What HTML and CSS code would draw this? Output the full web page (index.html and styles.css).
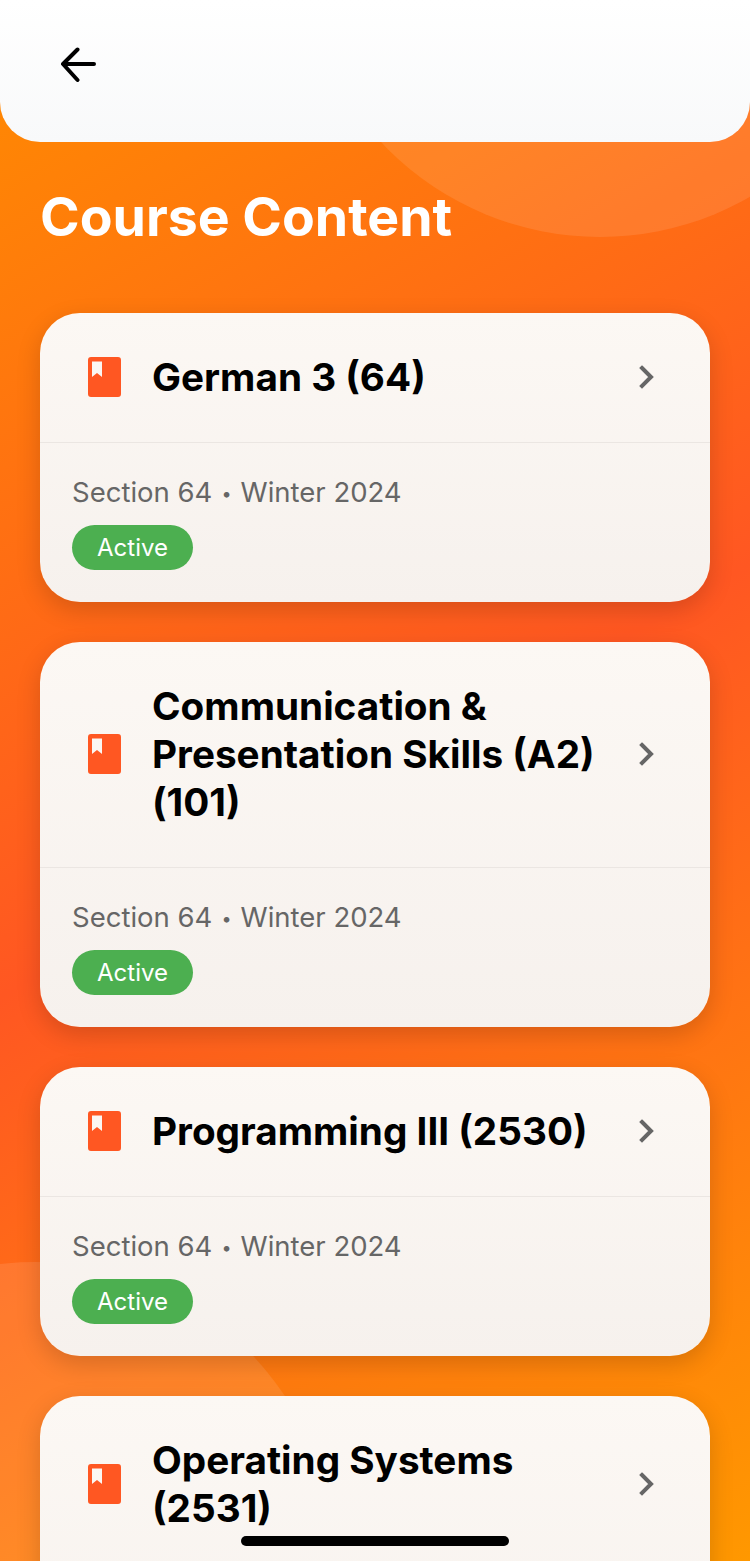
FILE: index.html
```html
<!DOCTYPE html>
<html lang="en">
<head>
<meta charset="utf-8">
<title>Course Content</title>
<link rel="stylesheet" href="styles.css">
</head>
<body>
<div class="screen">
  <div class="blob blob-top"></div>
  <div class="blob blob-bottom"></div>

  <header class="topbar">
    <button class="back" aria-label="Back">
      <svg width="37" height="36" viewBox="0 0 37 36" fill="none" stroke="#000" stroke-width="4" stroke-linecap="round" stroke-linejoin="round"><path d="M35 17H5M18.500 2.500 4 17 18.500 33"/></svg>
    </button>
  </header>

  <main class="content">
    <h1 class="page-title">Course Content</h1>

    <article class="card">
      <div class="card-head">
        <svg class="book" width="33" height="40" viewBox="0 0 33 40"><path fill="#ff5722" fill-rule="evenodd" d="M3 0h27a3 3 0 0 1 3 3v34a3 3 0 0 1-3 3H3a3 3 0 0 1-3-3V3a3 3 0 0 1 3-3Zm1 4.500V20l5-4 5 4V4.500Z"/></svg>
        <h2 class="course-name">German 3 (64)</h2>
        <svg class="chevron" width="18" height="26" viewBox="0 0 18 26" fill="none" stroke="#666" stroke-width="4" stroke-linecap="square" stroke-linejoin="miter"><path d="M4 4l9 9-9 9"/></svg>
      </div>
      <div class="card-foot">
        <p class="meta">Section 64 <span class="sep">•</span> Winter 2024</p>
        <span class="badge">Active</span>
      </div>
    </article>

    <article class="card">
      <div class="card-head">
        <svg class="book" width="33" height="40" viewBox="0 0 33 40"><path fill="#ff5722" fill-rule="evenodd" d="M3 0h27a3 3 0 0 1 3 3v34a3 3 0 0 1-3 3H3a3 3 0 0 1-3-3V3a3 3 0 0 1 3-3Zm1 4.500V20l5-4 5 4V4.500Z"/></svg>
        <h2 class="course-name">Communication &amp; Presentation Skills (A2) (101)</h2>
        <svg class="chevron" width="18" height="26" viewBox="0 0 18 26" fill="none" stroke="#666" stroke-width="4" stroke-linecap="square" stroke-linejoin="miter"><path d="M4 4l9 9-9 9"/></svg>
      </div>
      <div class="card-foot">
        <p class="meta">Section 64 <span class="sep">•</span> Winter 2024</p>
        <span class="badge">Active</span>
      </div>
    </article>

    <article class="card">
      <div class="card-head">
        <svg class="book" width="33" height="40" viewBox="0 0 33 40"><path fill="#ff5722" fill-rule="evenodd" d="M3 0h27a3 3 0 0 1 3 3v34a3 3 0 0 1-3 3H3a3 3 0 0 1-3-3V3a3 3 0 0 1 3-3Zm1 4.500V20l5-4 5 4V4.500Z"/></svg>
        <h2 class="course-name">Programming III (2530)</h2>
        <svg class="chevron" width="18" height="26" viewBox="0 0 18 26" fill="none" stroke="#666" stroke-width="4" stroke-linecap="square" stroke-linejoin="miter"><path d="M4 4l9 9-9 9"/></svg>
      </div>
      <div class="card-foot">
        <p class="meta">Section 64 <span class="sep">•</span> Winter 2024</p>
        <span class="badge">Active</span>
      </div>
    </article>

    <article class="card card-last">
      <div class="card-head">
        <svg class="book" width="33" height="40" viewBox="0 0 33 40"><path fill="#ff5722" fill-rule="evenodd" d="M3 0h27a3 3 0 0 1 3 3v34a3 3 0 0 1-3 3H3a3 3 0 0 1-3-3V3a3 3 0 0 1 3-3Zm1 4.500V20l5-4 5 4V4.500Z"/></svg>
        <h2 class="course-name">Operating Systems (2531)</h2>
        <svg class="chevron" width="18" height="26" viewBox="0 0 18 26" fill="none" stroke="#666" stroke-width="4" stroke-linecap="square" stroke-linejoin="miter"><path d="M4 4l9 9-9 9"/></svg>
      </div>
    </article>
  </main>

  <div class="home-indicator"></div>
</div>
</body>
</html>
```

FILE: styles.css
```css
* {
  box-sizing: border-box;
}

html,
body {
  margin: 0;
  padding: 0;
}

body {
  font-family: Inter, "Liberation Sans", sans-serif;
}

.screen {
  position: relative;
  width: 750px;
  height: 1561px;
  overflow: hidden;
  background: linear-gradient(150deg, #ff8c00 0%, #ff5722 50%, #ff9800 100%);
}

/* Decorative translucent circles behind the content */
.blob {
  position: absolute;
  width: 600px;
  height: 600px;
  border-radius: 50%;
  background: rgba(255, 255, 255, 0.1);
}

.blob-top {
  top: -363px;
  left: 300px;
}

.blob-bottom {
  top: 1262px;
  left: -265px;
}

.topbar {
  position: relative;
  height: 142px;
  padding: 47px 0 0 59px;
  border-radius: 0 0 40px 40px;
  background: linear-gradient(180deg, #ffffff 0%, #f8f9fa 100%);
}

.back {
  display: block;
  width: 37px;
  height: 36px;
  padding: 0;
  border: 0;
  background: none;
}

.back svg {
  display: block;
}

.content {
  position: relative;
  padding: 42px 40px 0;
}

.page-title {
  margin: 0 0 63px;
  font-size: 53.600px;
  line-height: 66px;
  font-weight: 700;
  color: #fff;
}

.card {
  margin-bottom: 40px;
  border-radius: 40px;
  background: linear-gradient(180deg, #fcf8f4 0%, #f6f1ed 100%);
  box-shadow: 0 8px 24px rgba(0, 0, 0, 0.16);
}

/* The last card runs past the bottom of the screen */
.card-last {
  min-height: 337px;
}

.card-head {
  display: flex;
  align-items: center;
  padding: 40px 54px 41px 48px;
  border-bottom: 1px solid #ebe6e2;
}

.book {
  flex: none;
  margin-right: 31px;
}

.course-name {
  flex: 1;
  margin: 0;
  font-size: 38.700px;
  line-height: 48px;
  font-weight: 700;
  color: #000;
}

.chevron {
  flex: none;
  margin-left: 32px;
}

.card-foot {
  padding: 31px 32px 32px;
}

.meta {
  margin: 0 0 15px;
  font-size: 27.500px;
  line-height: 36px;
  color: #666;
}

.sep {
  margin: 0 1.300px;
  font-size: 18px;
  line-height: 0;
  vertical-align: 2px;
}

.badge {
  display: block;
  width: 121px;
  height: 45px;
  border-radius: 23px;
  background: #4caf50;
  color: #fff;
  font-size: 24px;
  line-height: 45px;
  font-weight: 400;
  text-align: center;
}

.home-indicator {
  position: absolute;
  left: 241px;
  top: 1536px;
  width: 268px;
  height: 10px;
  border-radius: 5px;
  background: #000;
}
```
